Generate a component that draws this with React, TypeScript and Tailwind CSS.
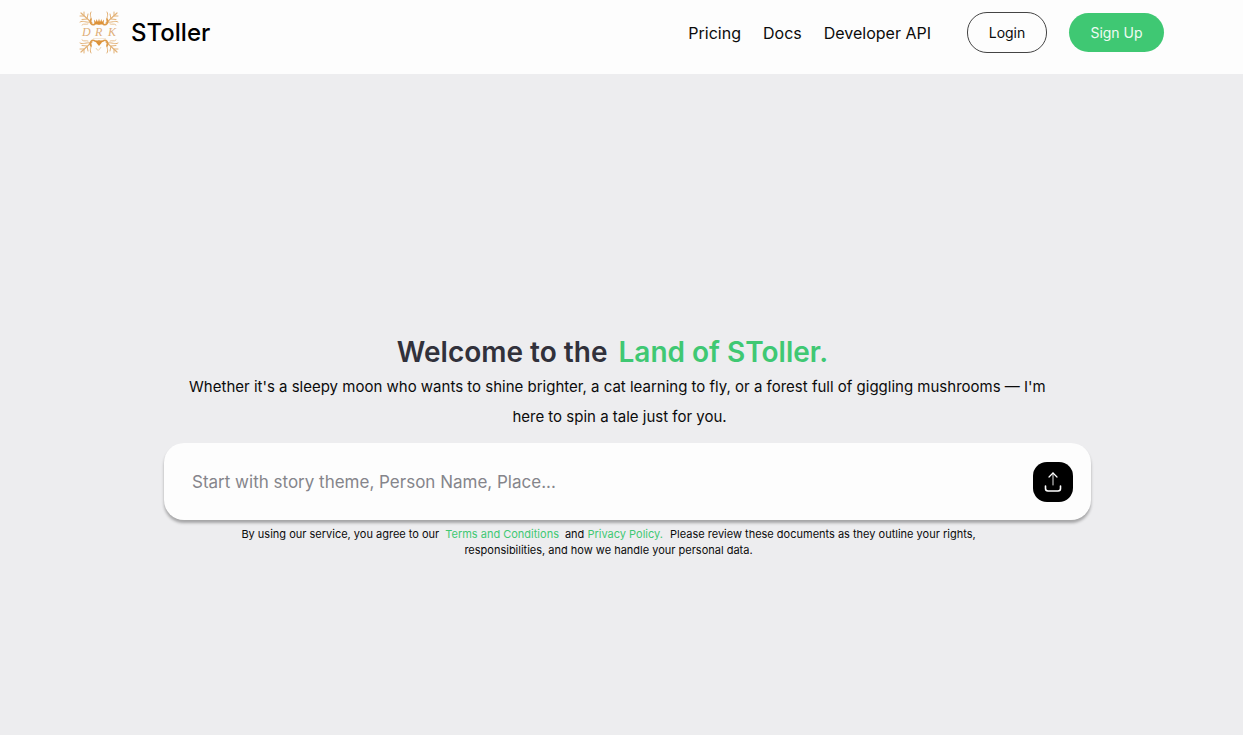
function Flourish() {
  return (
    <g fill="none" stroke="#e3b277" strokeLinecap="round">
      <path d="M2 2 L13 12" strokeWidth="1.2" />
      <path d="M1 5 L5 5 L5 1 M3 8.5 L8 8 L9 3" strokeWidth="1" />
      <path d="M1 11 C4 9 7 12 11 11 M12 1 C10 4 13 7 12 10" strokeWidth="1" />
      <path d="M3 14 C5 12 7 14 9 13" strokeWidth="0.8" />
      <path d="M12 8 C10 12 13 15 16 13 C17 12 18 13 20 13" strokeWidth="1.6" stroke="#dd9a48" />
    </g>
  );
}

function Logo() {
  return (
    <svg viewBox="0 0 40 44" className="h-11 w-10 shrink-0" role="img" aria-label="DRK crest">
      <Flourish />
      <g transform="matrix(-1 0 0 1 40 0)"><Flourish /></g>
      <g transform="matrix(1 0 0 -1 0 43)"><Flourish /></g>
      <g transform="matrix(-1 0 0 -1 40 43)"><Flourish /></g>
      <path d="M15.5 13 L15 8.5 L17 11 L17.5 8 L19 11 L20 7.5 L21 11 L22.5 8 L23 11 L25 8.5 L24.5 13 Z" fill="#dd9238" />
      <path d="M16.5 29.5 L20 30.5 L23.5 29.5 L22.5 32 L20 35 L17.5 32 Z" fill="#dd9238" />
      <path d="M17 37 Q19 42 22 36" fill="none" stroke="#e9c89c" strokeWidth="0.8" />
      <g fill="#dfae78" fontFamily="Liberation Serif, serif" fontStyle="italic" fontSize="12">
        <text x="3" y="25">D</text>
        <text x="16" y="25">R</text>
        <text x="29" y="25">K</text>
      </g>
      <path d="M14 27.5 H27" stroke="#efd9bd" strokeWidth="0.6" />
    </svg>
  );
}

function UploadIcon() {
  return (
    <svg viewBox="0 0 20 24" className="h-6 w-5" fill="none" stroke="white" strokeLinecap="round" strokeLinejoin="round" aria-hidden="true">
      <path d="M10 15 V3" strokeWidth="0.9" />
      <path d="M6 7 L10 3 L14 7" strokeWidth="1.2" />
      <path d="M2.5 16 V18.5 Q2.5 21 5 21 H15 Q17.5 21 17.5 18.5 V16" strokeWidth="1.6" />
    </svg>
  );
}

export default function App() {
  return (
    <div className="flex min-h-screen flex-col bg-[#ededef] font-['Inter',sans-serif] text-[#0b0b0b]">
      <header className="flex h-[74px] items-start justify-between bg-[#fdfdfd] px-[79px]">
        <a href="#home" className="mt-[11px] flex items-center gap-3">
          <Logo />
          <span className="text-2xl font-medium text-black">SToller</span>
        </a>
        <nav className="mt-3 flex items-center text-base">
          <div className="flex gap-[22px]">
            <a href="#pricing">Pricing</a>
            <a href="#docs">Docs</a>
            <a href="#api">Developer API</a>
          </div>
          <button type="button" className="ml-9 h-[41px] w-20 rounded-[20px] border border-[#444] text-sm">Login</button>
          <button type="button" className="ml-[22px] h-[39px] w-[95px] rounded-[20px] bg-[#3fc873] text-sm text-[#effbf3]">Sign Up</button>
        </nav>
      </header>

      <main className="flex flex-1 flex-col pt-[260px] pr-[152px] pb-10 pl-[164px]">
        <h1 className="pr-[30px] text-center text-[28px] leading-9 font-semibold text-[#31313b]">
          Welcome to the <span className="ml-1 text-[#3fc873]">Land of SToller.</span>
        </h1>
        <p className="mt-0.5 pr-4 text-center text-[15px] leading-[30px]">
          Whether it's a sleepy moon who wants to shine brighter, a cat learning to fly, or a forest full of giggling mushrooms — I'm&nbsp;
          <br />
          here to spin a tale just for you.
        </p>
        <form
          onSubmit={(e) => e.preventDefault()}
          className="mt-[11px] flex h-[77px] items-center rounded-[20px] bg-[#fdfdfd] pr-[18px] pl-7 shadow-[0_3px_3px_rgba(0,0,0,0.3)]"
        >
          <input
            type="text"
            aria-label="Story prompt"
            placeholder="Start with story theme, Person Name, Place..."
            className="min-w-0 flex-1 bg-transparent text-[17px] leading-7 outline-none placeholder:text-[#85858b]"
          />
          <button type="submit" aria-label="Send" className="flex size-10 items-center justify-center rounded-[14px] bg-black">
            <UploadIcon />
          </button>
        </form>
        <p className="mt-1.5 pr-[38px] text-center text-[11px] leading-4">
          By using our service, you agree to our
          <a href="#terms" className="mx-1.5 text-[#3fc873]">Terms and Conditions</a>
          and <a href="#privacy" className="mr-1 text-[#3fc873]">Privacy Policy.</a> Please review these documents as they outline your rights,
          <br />
          responsibilities, and how we handle your personal data.
        </p>
      </main>
    </div>
  );
}
